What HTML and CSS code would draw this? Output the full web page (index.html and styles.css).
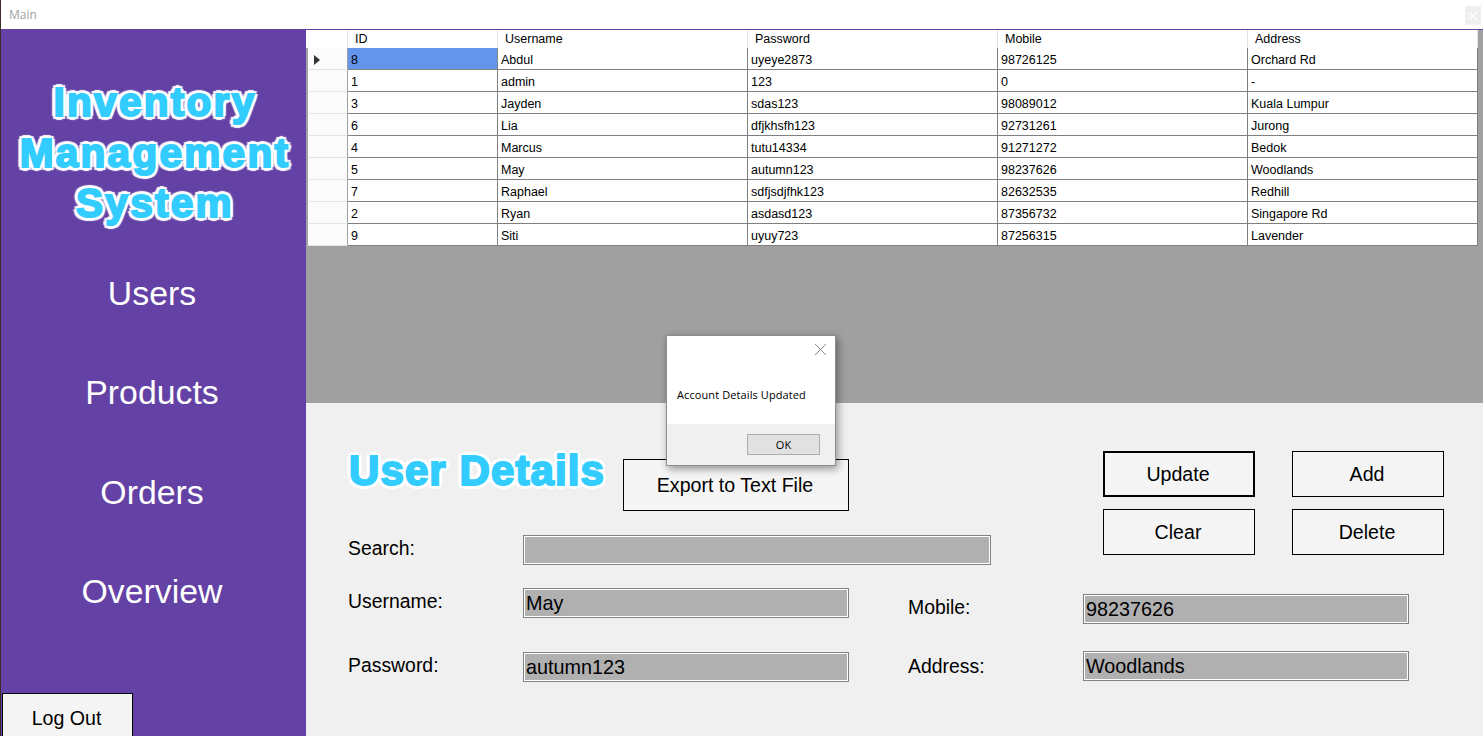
FILE: index.html
```html
<!DOCTYPE html>
<html lang="en">
<head>
<meta charset="utf-8">
<title>Main</title>
<link rel="stylesheet" href="styles.css">
</head>
<body>
<div class="window">
  <header class="titlebar">
    <span class="titlebar-name">Main</span>
    <span class="titlebar-close"><svg width="10" height="10" viewBox="0 0 10 10"><path d="M1 1 9 9M9 1 1 9" stroke="#fff" stroke-width="1.2" fill="none"/></svg></span>
  </header>
  <div class="main">
    <aside class="sidebar">
      <h1 class="brand">Inventory<br>Management<br>System</h1>
      <nav class="nav">
        <a class="nav-item">Users</a>
        <a class="nav-item">Products</a>
        <a class="nav-item">Orders</a>
        <a class="nav-item">Overview</a>
      </nav>
      <button class="btn btn-logout">Log Out</button>
    </aside>
    <section class="content">
      <div class="grid-area">
        <table class="grid">
          <colgroup>
            <col class="c-head"><col class="c-id"><col class="c-wide"><col class="c-wide"><col class="c-wide"><col class="c-addr">
          </colgroup>
          <thead>
            <tr><th></th><th>ID</th><th>Username</th><th>Password</th><th>Mobile</th><th>Address</th></tr>
          </thead>
          <tbody>
            <tr><td class="rowhead"><svg class="arrow" width="6" height="10" viewBox="0 0 6 10"><path d="M0 0 6 5 0 10Z" fill="#333"/></svg></td><td class="selected">8</td><td>Abdul</td><td>uyeye2873</td><td>98726125</td><td>Orchard Rd</td></tr>
            <tr><td class="rowhead"></td><td>1</td><td>admin</td><td>123</td><td>0</td><td>-</td></tr>
            <tr><td class="rowhead"></td><td>3</td><td>Jayden</td><td>sdas123</td><td>98089012</td><td>Kuala Lumpur</td></tr>
            <tr><td class="rowhead"></td><td>6</td><td>Lia</td><td>dfjkhsfh123</td><td>92731261</td><td>Jurong</td></tr>
            <tr><td class="rowhead"></td><td>4</td><td>Marcus</td><td>tutu14334</td><td>91271272</td><td>Bedok</td></tr>
            <tr><td class="rowhead"></td><td>5</td><td>May</td><td>autumn123</td><td>98237626</td><td>Woodlands</td></tr>
            <tr><td class="rowhead"></td><td>7</td><td>Raphael</td><td>sdfjsdjfhk123</td><td>82632535</td><td>Redhill</td></tr>
            <tr><td class="rowhead"></td><td>2</td><td>Ryan</td><td>asdasd123</td><td>87356732</td><td>Singapore Rd</td></tr>
            <tr><td class="rowhead"></td><td>9</td><td>Siti</td><td>uyuy723</td><td>87256315</td><td>Lavender</td></tr>
          </tbody>
        </table>
      </div>
      <div class="panel">
        <div class="upper">
          <div class="upper-left">
            <div class="heading-row">
              <h2 class="heading">User Details</h2>
              <button class="btn btn-export">Export to Text File</button>
            </div>
            <label class="field field-search"><span class="label">Search:</span><input class="input" value=""></label>
          </div>
          <div class="actions">
            <button class="btn btn-action btn-default">Update</button>
            <button class="btn btn-action">Add</button>
            <button class="btn btn-action">Clear</button>
            <button class="btn btn-action">Delete</button>
          </div>
        </div>
        <div class="lower">
          <div class="col-left">
            <label class="field"><span class="label">Username:</span><input class="input" value="May"></label>
            <label class="field"><span class="label">Password:</span><input class="input" value="autumn123"></label>
          </div>
          <div class="col-right">
            <label class="field"><span class="label">Mobile:</span><input class="input" value="98237626"></label>
            <label class="field"><span class="label label-low">Address:</span><input class="input" value="Woodlands"></label>
          </div>
        </div>
      </div>
    </section>
  </div>
</div>
<div class="dialog" role="dialog">
  <div class="dialog-body">
    <svg class="dialog-close" width="13" height="13" viewBox="0 0 13 13"><path d="M1 1 12 12M12 1 1 12" stroke="#8a8a8a" stroke-width="1" fill="none"/></svg>
    <p class="dialog-text">Account Details Updated</p>
  </div>
  <div class="dialog-foot"><button class="dialog-ok">OK</button></div>
</div>
</body>
</html>
```
FILE: styles.css
```css
* { box-sizing: border-box; }
html, body { margin: 0; height: 100%; overflow: hidden; }
body { font-family: "Liberation Sans", Arial, sans-serif; color: #000; background: #fff; }

.window { height: 736px; display: flex; flex-direction: column; border-left: 1px solid #3d2c28; overflow: hidden; }

.titlebar { height: 29px; flex: none; background: #fff; display: flex; align-items: flex-start; justify-content: space-between; padding: 0 2px 0 8px; }
.titlebar-name { font: 12px/29px "Open Sans", sans-serif; color: #a3a3a3; }
.titlebar-close { width: 16px; height: 19px; margin-top: 6px; background: #efefef; display: flex; align-items: center; justify-content: center; }

.main { flex: 1; display: flex; min-height: 0; }

.sidebar { width: 305px; flex: none; background: #6441a4; display: flex; flex-direction: column; align-items: flex-start; padding-top: 48px; overflow: hidden; }
.brand { width: 100%; margin: 0; padding-left: 3px; font: bold 40.5px/50.5px "Liberation Sans", sans-serif; letter-spacing: 2.3px; text-align: center; color: #33ccff; -webkit-text-stroke: 2px #33ccff; text-shadow: 4px 0 1px #fff, -4px 0 1px #fff, 0 4px 1px #fff, 0 -4px 1px #fff, 3px 3px 1px #fff, -3px 3px 1px #fff, 3px -3px 1px #fff, -3px -3px 1px #fff; }
.nav { width: 100%; margin-top: 15px; padding-right: 3px; display: flex; flex-direction: column; }
.nav-item { height: 99.5px; display: flex; align-items: center; justify-content: center; font-size: 33.8px; color: #fff; }

.btn { font-family: "Liberation Sans", sans-serif; font-size: 19.6px; color: #000; background: #f5f5f5; border: 1px solid #000; padding: 0 2px 0 0; flex: none; }
.btn-logout { width: 131px; height: 50px; margin: 51.5px 0 0 1px; }

.content { flex: 1; display: flex; flex-direction: column; min-width: 0; }
.grid-area { height: 374px; flex: none; background: #a0a0a0; border-top: 1px solid #6441a4; }

.grid { width: 1171px; margin-left: 1px; table-layout: fixed; border-collapse: separate; border-spacing: 0; font-size: 12.5px; background: #fff; }
.c-head { width: 41px; }
.c-id { width: 150px; }
.c-wide { width: 250px; }
.c-addr { width: 230px; }
.grid th { height: 18px; padding: 0 0 0 7px; font-weight: normal; text-align: left; background: #fff; border-right: 1px solid #e3e3e3; font-size: 12.5px; }
.grid th:first-child { box-shadow: -1px 0 0 #fff; }
.grid td { height: 22px; padding: 2px 0 0 3px; border-right: 1px solid #808080; border-bottom: 1px solid #808080; white-space: nowrap; }
.grid .rowhead { padding: 2px 0 0 6px; background: #fbfbfb; border-left: 1px solid #a0a0a0; border-bottom-color: #e3e3e3; border-right-color: #a0a0a0; }
.grid .selected { background: #6495ed; }
.arrow { display: block; }

.panel { flex: 1; background: #f0f0f0; padding-left: 42px; }
.upper { display: flex; }
.upper-left { width: 755px; flex: none; padding-top: 56px; }
.heading-row { display: flex; height: 52px; }
.heading { width: 275px; flex: none; margin: 0; padding: 1px 0 0 1px; font: bold 42px/22px "Liberation Sans", sans-serif; letter-spacing: 1.1px; color: #33ccff; -webkit-text-stroke: 2px #33ccff; text-shadow: 4px 0 1px #fff, -4px 0 1px #fff, 0 4px 1px #fff, 0 -4px 1px #fff, 3px 3px 1px #fff, -3px 3px 1px #fff, 3px -3px 1px #fff, -3px -3px 1px #fff; }
.btn-export { width: 226px; height: 52px; }
.actions { display: grid; grid-template-columns: 152px 152px; grid-auto-rows: 46px; column-gap: 37px; row-gap: 12px; padding-top: 48px; }
.btn-action { width: 152px; height: 46px; }
.btn-default { border-width: 2px; }

.field { display: grid; grid-template-columns: 175px 326px; align-items: center; }
.field-search { grid-template-columns: 175px 468px; margin-top: 24px; }
.label { font-size: 19.4px; padding-bottom: 4px; }
.label-low { padding-bottom: 0; }
.input { width: 100%; height: 30px; padding: 0 0 0 2px; font: 19.8px "Liberation Sans", sans-serif; color: #000; background: #b0b0b0; border: 1px solid #828282; box-shadow: inset 0 0 0 1px #fff; outline: 0; }

.lower { display: flex; margin-top: 23px; }
.col-left { width: 560px; flex: none; display: flex; flex-direction: column; row-gap: 34px; }
.col-right { display: flex; flex-direction: column; row-gap: 27px; margin-top: 6px; }

.dialog { position: absolute; left: 666px; top: 335px; width: 170px; height: 131px; background: #f0f0f0; border: 1px solid #8c8c8c; box-shadow: 2px 3px 8px rgba(0,0,0,.4); display: flex; flex-direction: column; }
.dialog-body { position: relative; height: 88px; flex: none; background: #fff; }
.dialog-close { position: absolute; right: 8px; top: 7px; }
.dialog-text { margin: 0; padding: 51px 0 0 10px; font: 11px/15px "Open Sans", sans-serif; letter-spacing: .1px; color: #000; }
.dialog-foot { flex: 1; display: flex; justify-content: flex-end; padding: 10px 15px 0 0; }
.dialog-ok { width: 73px; height: 21px; padding: 0; font: 11px "Open Sans", sans-serif; color: #000; background: #e1e1e1; border: 1px solid #adadad; }
```
